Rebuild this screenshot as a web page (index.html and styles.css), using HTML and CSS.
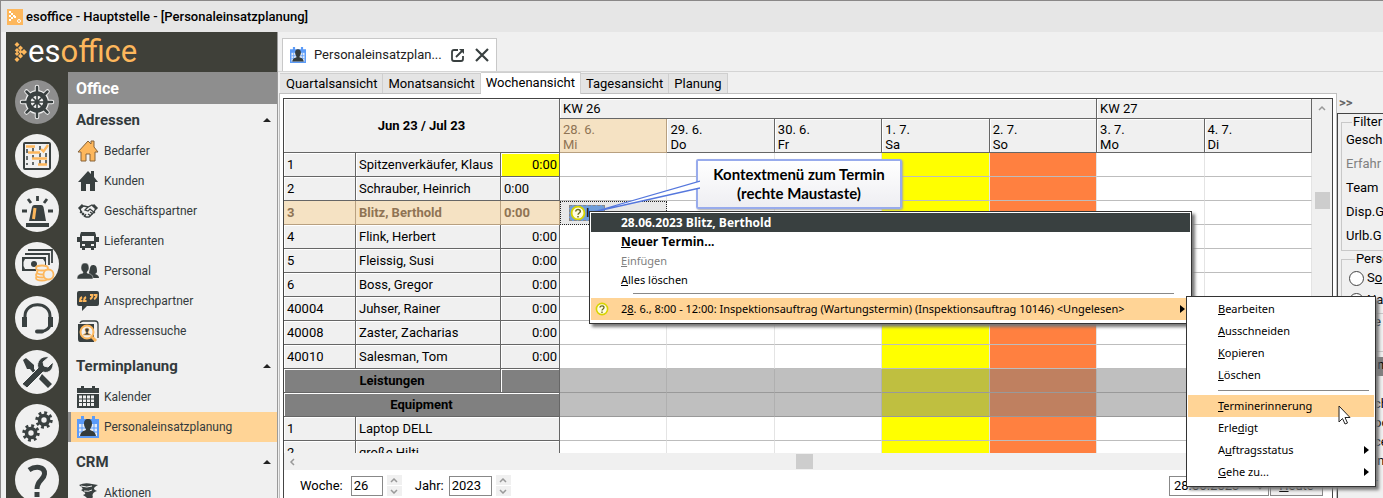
FILE: index.html
```html
<!DOCTYPE html>
<html lang="de">
<head>
    <meta charset="UTF-8">
    <meta name="viewport" content="width=device-width, initial-scale=1.0">
    <title>esoffice - Hauptstelle - [Personaleinsatzplanung]</title>
    <link rel="stylesheet" href="styles.css">
</head>
<body>
    <!-- Shared icons -->
    <svg class="sprite" width="0" height="0" aria-hidden="true">
        <defs>
            <symbol id="house" viewBox="0 0 22 22">
                <path d="M11 1 L1 12 H4 V21 H9 V14 H13 V21 H18 V12 H21 L17 7 V1 H14 V4 Z" />
            </symbol>
            <symbol id="staff" viewBox="0 0 22 22">
                <path d="M0 3 H22 V22 H0 Z M4 0 H7 V5 H4 Z M15 0 H18 V5 H15 Z" fill="#5b9bf8" />
                <path d="M2 8 H20 V20 H2 Z" fill="#e4ecf8" />
                <path d="M2 12 H20 M2 16 H20 M5 8 V20 M17 8 V20" stroke="#5b9bf8" fill="none" />
                <path d="M11 3 C14 3 15 5 15 8 C15 11 13 12 13 14 C15 15 18 15 19 20 H3 C4 15 7 15 9 14 C9 12 7 11 7 8 C7 5 8 3 11 3 Z" fill="#343c3c" />
            </symbol>
            <symbol id="gear" viewBox="-10 -10 20 20">
                <circle r="5" fill="none" stroke="#394040" stroke-width="4" />
                <circle r="8" fill="none" stroke="#394040" stroke-width="3.4" stroke-dasharray="3.14 3.14" />
            </symbol>
            <symbol id="question" viewBox="0 0 14 14">
                <circle cx="7" cy="7" r="5.6" fill="#fffde0" stroke="#d8d400" stroke-width="1.6" />
                <path d="M5 5.6 C5 3.4 9 3.4 9 5.6 C9 7 7 7 7 8.6 M7 9.6 V11" fill="none" stroke="#6a6a20" stroke-width="1.3" />
            </symbol>
        </defs>
    </svg>

    <header class="titlebar">
        <svg class="app-icon" viewBox="0 0 16 16">
            <rect width="16" height="16" fill="#fdb75c" />
            <path d="M2 2h2v2h-2z M4 4h2v2h-2z M6 6h2v2h-2z M4 8h2v2h-2z M2 6h2v2h-2z M2 10h2v2h-2z M7 7h2v2h-2z" fill="#fff" />
            <circle cx="12" cy="12" r="1.5" fill="none" stroke="#fff" />
        </svg>
        <span>esoffice - Hauptstelle - [Personaleinsatzplanung]</span>
    </header>

    <div class="app">
        <aside class="sidebar">
            <div class="logo">
                <svg width="13" height="20" viewBox="0 0 13 20" fill="#fdb75c">
                    <path d="M3 0l2.500 2.500-2.500 2.500-2.500-2.500z M6.500 3.500l2.500 2.500-2.500 2.500-2.500-2.500z M3 6l2.200 2.200-2.200 2.200-2.200-2.200z M10 7l3 3-3 3-3-3z M3 9.600l2.200 2.200-2.200 2.200-2.200-2.200z M6.500 7.600l2.200 2.200-2.200 2.200-2.200-2.200z M6.500 11.500l2.500 2.500-2.500 2.500-2.500-2.500z M3 15l2.500 2.500-2.500 2.500-2.500-2.500z" />
                </svg>
                <span class="logo-text">es<b>office</b></span>
            </div>
            <div class="sidebar-body">
                <nav class="rail" aria-label="Module">
                    <button class="rail-button active" aria-label="Office">
                        <svg viewBox="0 0 44 44">
                            <g stroke="#f0f0f0" stroke-width="4.500" stroke-linecap="round"><path d="M22 7V37M7 22H37M11.500 11.500L32.500 32.500M32.500 11.500L11.500 32.500" /></g>
                            <circle cx="22" cy="22" r="12" fill="#f0f0f0" />
                            <g stroke="#394040" stroke-width="2.500" stroke-linecap="round"><path d="M22 7V37M7 22H37M11.500 11.500L32.500 32.500M32.500 11.500L11.500 32.500" /></g>
                            <circle cx="22" cy="22" r="8.500" fill="#f0f0f0" stroke="#394040" stroke-width="4.500" />
                            <path d="M22 15V29M15 22H29M17 17L27 27M27 17L17 27" stroke="#394040" stroke-width="1.600" />
                            <circle cx="22" cy="22" r="2.500" fill="#394040" />
                        </svg>
                    </button>
                    <button class="rail-button" aria-label="Planung">
                        <svg viewBox="0 0 44 44" fill="none">
                            <rect x="9" y="9" width="26" height="26" rx="1" stroke="#394040" stroke-width="2" />
                            <path d="M12 15V31M18 14V31M25 12V31M31 19V31" stroke="#394040" stroke-width="1.500" stroke-dasharray="4 3" />
                            <path d="M11 12.500H20M13 18.500H25M17 24.500H32M23 30.500H32M26 15L28.500 17.500L33 11" stroke="#fdb75c" stroke-width="2.400" />
                        </svg>
                    </button>
                    <button class="rail-button" aria-label="Alarm">
                        <svg viewBox="0 0 44 44">
                            <path d="M14 33L17 19Q17.500 17 19.500 17H26Q28 17 28.500 19L31 33Z M11 35H34V39H11Z" fill="#394040" />
                            <path d="M20 20L18.500 31" stroke="#fdb75c" stroke-width="3" />
                            <path d="M22.500 8V13M13 11L16 15M32 11L29 15M7 23H12M33 23H38" stroke="#394040" stroke-width="2.800" />
                        </svg>
                    </button>
                    <button class="rail-button" aria-label="Finanzen">
                        <svg viewBox="0 0 44 44">
                            <path d="M13 8H37V21M10 12H34V23" fill="none" stroke="#394040" stroke-width="1.800" />
                            <rect x="7" y="15" width="24" height="14" fill="#394040" />
                            <path d="M10 17H28L30 20V24L28 27H10L8.500 24V20Z" fill="#f0f0f0" />
                            <circle cx="19" cy="22" r="3" fill="#394040" />
                            <path d="M21 28H34V38H21Z" fill="#f0f0f0" />
                            <g fill="#f0f0f0" stroke="#fdb75c" stroke-width="1.800"><ellipse cx="27" cy="36" rx="6" ry="2.500" /><ellipse cx="27" cy="33" rx="6" ry="2.500" /><ellipse cx="28" cy="30" rx="6" ry="2.500" /><ellipse cx="27" cy="26" rx="6" ry="2.500" /><circle cx="33.500" cy="32.500" r="5" /></g>
                        </svg>
                    </button>
                    <button class="rail-button" aria-label="Service">
                        <svg viewBox="0 0 44 44" fill="none" stroke="#394040">
                            <path d="M10 24V20C10 5 35 5 35 20V29Q34 34 27 35.500" stroke-width="3" />
                            <path d="M9.500 21V31M35.500 21V31" stroke-width="5" />
                            <path d="M22 35.500H27" stroke-width="4" stroke-linecap="round" />
                        </svg>
                    </button>
                    <button class="rail-button" aria-label="Werkzeuge">
                        <svg viewBox="0 0 44 44">
                            <path d="M8 10L11 8L19 15L19 19L23 23L20 25L15 19L12 19Z M27 24L37 34L33 38L24 29Z" fill="#394040" />
                            <path d="M7 34L23 18C21 12 26 5 34 7L28 12L29 16L33 17L38 12C39 19 34 24 28 22L12 38Z" fill="#394040" stroke="#f0f0f0" stroke-width="1" />
                        </svg>
                    </button>
                    <button class="rail-button" aria-label="Einstellungen">
                        <svg viewBox="0 0 44 44">
                            <use href="#gear" x="20" y="7" width="18" height="18" />
                            <use href="#gear" x="7" y="20" width="18" height="18" />
                        </svg>
                    </button>
                    <button class="rail-button" aria-label="Hilfe">
                        <svg viewBox="0 0 44 44" fill="none" stroke="#394040" stroke-width="5">
                            <path d="M14 12C20 8 30 8 29.500 16C29 22 22 22 22 31M22 34V39" />
                        </svg>
                    </button>
                </nav>
                <nav class="menu" aria-label="Office">
                    <h1 class="menu-title">Office</h1>
                    <h2 class="menu-heading first">Adressen <i class="up"></i></h2>
                    <a class="menu-item" href="#">
                        <svg class="icon" viewBox="0 0 22 22"><use href="#house" fill="#fdb75c" stroke="#85633a" /></svg>Bedarfer
                    </a>
                    <a class="menu-item" href="#">
                        <svg class="icon" viewBox="0 0 22 22"><use href="#house" /></svg>Kunden
                    </a>
                    <a class="menu-item" href="#">
                        <svg class="icon" viewBox="0 0 22 22">
                            <g fill="none" stroke="#394040" stroke-width="1.300">
                                <path d="M3 8L7 6L11 7L15 5L19 8L17 12L12 17L9 17L4 12Z" />
                                <path d="M11 7L8 10L11 11L13 9L18 13M11 14L14 16M13 12L16 14M5 11L3 13M7 13L5 15M9 14L7 17" />
                                <path d="M2 9L6 5M20 9L16 5" stroke-width="3" />
                            </g>
                        </svg>Geschäftspartner
                    </a>
                    <a class="menu-item" href="#">
                        <svg class="icon" viewBox="0 0 22 22">
                            <path d="M4 2H18L19 5V18H17V20H14V18H8V20H5V18H3V5Z M0 7H3V12H0Z M19 7H22V12H19Z" />
                            <path d="M5 6H17V11H5Z M5 14H8V16H5Z M14 14H17V16H14Z" fill="#f0f0f0" />
                        </svg>Lieferanten
                    </a>
                    <a class="menu-item" href="#">
                        <svg class="icon" viewBox="0 0 22 22">
                            <path d="M16 5C19 5 20 7 20 11C20 13 19 13 18 14C21 15 22 16 22 18H13L12 13C13 8 13 5 16 5Z" />
                            <path d="M8 3C11 3 12 5 12 8C12 11 10 11 10 13C14 14 16 15 16 19H0C0 15 2 14 6 13C6 11 4 11 4 8C4 5 5 3 8 3Z" stroke="#f0f0f0" stroke-width=".5" />
                        </svg>Personal
                    </a>
                    <a class="menu-item" href="#">
                        <svg class="icon" viewBox="0 0 22 22">
                            <path d="M2 1H20Q22 1 22 3V14Q22 16 20 16H10L5 21V16H2Q0 16 0 14V3Q0 1 2 1Z" />
                            <path d="M5 7Q3 8 3 11H5.500M9 7Q7 8 7 11H9.500M13 5H15.500Q15.500 8 13 9M17 5H19.500Q19.500 8 17 9" fill="none" stroke="#fdb75c" stroke-width="2" />
                        </svg>Ansprechpartner
                    </a>
                    <a class="menu-item" href="#">
                        <svg class="icon" viewBox="0 0 22 22">
                            <path d="M3 3Q4 1 6 1H18Q21 1 21 4V18" fill="none" stroke="#394040" stroke-width="1.300" />
                            <path d="M1 4H17V22H3Q1 22 1 19Z" />
                            <circle cx="10" cy="12" r="6.500" fill="#f0f0f0" stroke="#fdb75c" stroke-width="2" />
                            <path d="M15 17L19 21" stroke="#fdb75c" stroke-width="3" />
                            <path d="M10 8C13 8 12 11 11 12V13L14 15H6L9 13V12C8 11 7 8 10 8Z" stroke="#fdb75c" stroke-width=".7" />
                        </svg>Adressensuche
                    </a>
                    <h2 class="menu-heading">Terminplanung <i class="up"></i></h2>
                    <a class="menu-item" href="#">
                        <svg class="icon" viewBox="0 0 22 22">
                            <path d="M0 2H22V7H0Z M0 8H22V22H0Z M4 0H7V3H4Z M15 0H18V3H15Z" />
                            <path d="M2 9.500H17V20H2Z" fill="#f0f0f0" />
                            <path d="M2 13H17M2 16.500H17M5.500 9V20M9.500 9V20M13.500 9V20" stroke="#394040" />
                        </svg>Kalender
                    </a>
                    <a class="menu-item selected" href="#">
                        <svg class="icon"><use href="#staff" /></svg>Personaleinsatzplanung
                    </a>
                    <h2 class="menu-heading">CRM <i class="up"></i></h2>
                    <a class="menu-item" href="#">
                        <svg class="icon" viewBox="0 0 22 22">
                            <path d="M2 3Q8 0 15 2L21 3Q15 6 18 8L20 9Q14 11 16 15Q13 19 8 20Q11 16 9 15L6 13Q10 12 7 10L4 8Q8 7 2 3Z" />
                            <path d="M4 4Q10 6 15 4M7 9Q12 10 15 8" fill="none" stroke="#f0f0f0" />
                        </svg>Aktionen
                    </a>
                </nav>
            </div>
        </aside>

        <main class="main">
            <div class="doc-tabs">
                <div class="doc-tab">
                    <svg class="tab-icon"><use href="#staff" /></svg>
                    <span>Personaleinsatzplan...</span>
                    <button class="tab-button" aria-label="In neuem Fenster öffnen">
                        <svg width="14" height="14" viewBox="0 0 14 14" fill="none" stroke="#394040" stroke-width="1.800">
                            <path d="M7 2H3Q1 2 1 4V11Q1 13 3 13H10Q12 13 12 11V8M5 9L11 3" />
                            <path d="M8 1H13V6Z" fill="#394040" stroke="none" />
                        </svg>
                    </button>
                    <button class="tab-button" aria-label="Schließen">
                        <svg width="14" height="14" viewBox="0 0 14 14" stroke="#394040" stroke-width="2.200">
                            <path d="M1 1L13 13M13 1L1 13" />
                        </svg>
                    </button>
                </div>
            </div>

            <div class="view-tabs">
                <button class="view-tab">Quartalsansicht</button>
                <button class="view-tab">Monatsansicht</button>
                <button class="view-tab current">Wochenansicht</button>
                <button class="view-tab">Tagesansicht</button>
                <button class="view-tab">Planung</button>
            </div>

            <div class="workspace">
                <section class="planner-frame">
                    <div class="planner">
                        <div class="grid-area">
                            <div class="table-clip">
                                <table class="plan">
                                    <colgroup>
                                        <col class="col-nr"><col class="col-name"><col class="col-hours">
                                        <col><col><col><col><col><col><col>
                                    </colgroup>
                                    <thead>
                                        <tr class="weeks">
                                            <th colspan="3" rowspan="2" class="period">Jun 23 / Jul 23</th>
                                            <th colspan="5">KW 26</th>
                                            <th colspan="2">KW 27</th>
                                        </tr>
                                        <tr class="days">
                                            <th class="today">28. 6.<br>Mi</th>
                                            <th>29. 6.<br>Do</th>
                                            <th>30. 6.<br>Fr</th>
                                            <th>1. 7.<br>Sa</th>
                                            <th>2. 7.<br>So</th>
                                            <th>3. 7.<br>Mo</th>
                                            <th>4. 7.<br>Di</th>
                                        </tr>
                                    </thead>
                                    <tbody>
                                        <tr><th>1</th><th>Spitzenverkäufer, Klaus</th><th class="hours yellow">0:00</th><td></td><td></td><td></td><td class="sa"></td><td class="so"></td><td></td><td></td></tr>
                                        <tr><th>2</th><th>Schrauber, Heinrich</th><th>0:00</th><td></td><td></td><td></td><td class="sa"></td><td class="so"></td><td></td><td></td></tr>
                                        <tr class="picked"><th>3</th><th>Blitz, Berthold</th><th>0:00</th><td class="focus"><div class="event"><svg width="16" height="16"><use href="#question" /></svg>I</div></td><td></td><td></td><td class="sa"></td><td class="so"></td><td></td><td></td></tr>
                                        <tr><th>4</th><th>Flink, Herbert</th><th class="hours">0:00</th><td></td><td></td><td></td><td class="sa"></td><td class="so"></td><td></td><td></td></tr>
                                        <tr><th>5</th><th>Fleissig, Susi</th><th class="hours">0:00</th><td></td><td></td><td></td><td class="sa"></td><td class="so"></td><td></td><td></td></tr>
                                        <tr><th>6</th><th>Boss, Gregor</th><th class="hours">0:00</th><td></td><td></td><td></td><td class="sa"></td><td class="so"></td><td></td><td></td></tr>
                                        <tr><th>40004</th><th>Juhser, Rainer</th><th class="hours">0:00</th><td></td><td></td><td></td><td class="sa"></td><td class="so"></td><td></td><td></td></tr>
                                        <tr><th>40008</th><th>Zaster, Zacharias</th><th class="hours">0:00</th><td></td><td></td><td></td><td class="sa"></td><td class="so"></td><td></td><td></td></tr>
                                        <tr><th>40010</th><th>Salesman, Tom</th><th class="hours">0:00</th><td></td><td></td><td></td><td class="sa"></td><td class="so"></td><td></td><td></td></tr>
                                        <tr class="group"><th colspan="2">Leistungen</th><th></th><td></td><td></td><td></td><td class="sa"></td><td class="so"></td><td></td><td></td></tr>
                                        <tr class="group"><th colspan="3">Equipment</th><td></td><td></td><td></td><td class="sa"></td><td class="so"></td><td></td><td></td></tr>
                                        <tr><th>1</th><th colspan="2">Laptop DELL</th><td></td><td></td><td></td><td class="sa"></td><td class="so"></td><td></td><td></td></tr>
                                        <tr><th>2</th><th colspan="2">große Hilti</th><td></td><td></td><td></td><td class="sa"></td><td class="so"></td><td></td><td></td></tr>
                                    </tbody>
                                </table>
                            </div>
                            <div class="vscroll">
                                <svg width="8" height="6" viewBox="0 0 8 6"><path d="M1 5L4 2L7 5" /></svg>
                                <div class="vthumb"></div>
                            </div>
                        </div>
                        <div class="hscroll">
                            <svg width="6" height="8" viewBox="0 0 6 8"><path d="M5 1L2 4L5 7" /></svg>
                            <div class="hthumb"></div>
                        </div>
                        <form class="controls">
                            <label for="week">Woche:</label>
                            <input id="week" class="week" type="text" value="26">
                            <span class="spinner">
                                <button type="button" aria-label="Woche vor"><svg width="8" height="5" viewBox="0 0 8 5"><path d="M1 4L4 1L7 4" /></svg></button>
                                <button type="button" aria-label="Woche zurück"><svg width="8" height="5" viewBox="0 0 8 5"><path d="M1 1L4 4L7 1" /></svg></button>
                            </span>
                            <label for="year" class="year-label">Jahr:</label>
                            <input id="year" class="year" type="text" value="2023">
                            <span class="spinner">
                                <button type="button" aria-label="Jahr vor"><svg width="8" height="5" viewBox="0 0 8 5"><path d="M1 4L4 1L7 4" /></svg></button>
                                <button type="button" aria-label="Jahr zurück"><svg width="8" height="5" viewBox="0 0 8 5"><path d="M1 1L4 4L7 1" /></svg></button>
                            </span>
                            <select class="date" aria-label="Datum"><option>28.06.2023</option></select>
                            <button type="button" class="today-button"><u>H</u>eute</button>
                        </form>
                    </div>
                </section>

                <aside class="filter">
                    <button class="collapse" aria-label="Filter ausblenden">&gt;&gt;</button>
                    <div class="filter-body">
                        <fieldset>
                            <legend>Filter</legend>
                            <p>Gesch</p>
                            <p class="off">Erfahr</p>
                            <p>Team</p>
                            <p>Disp.G</p>
                            <p>Urlb.G</p>
                        </fieldset>
                        <fieldset class="persons">
                            <legend>Perso</legend>
                            <label><input type="radio" name="sort"><span>S<u>o</u></span></label>
                            <label><input type="radio" name="sort"><span>Na</span></label>
                        </fieldset>
                        <p class="rest">e</p>
                        <p class="band">in</p>
                        <div class="legend-list">
                            <p>ch</p>
                            <p>oo</p>
                            <p>ce</p>
                            <p>in</p>
                        </div>
                        <p class="private">Privat-</p>
                    </div>
                </aside>
            </div>
        </main>
    </div>

    <!-- Callout -->
    <div class="callout">
        <svg class="pointer" width="108" height="34" viewBox="0 0 108 34">
            <path d="M108 2L1 33L108 9" fill="#fff" stroke="#5577dd" stroke-width="1.300" />
        </svg>
        <p>Kontextmenü zum Termin<br>(rechte Maustaste)</p>
    </div>

    <!-- Context menu -->
    <div class="context-menu" role="menu">
        <div class="context-title">28.06.2023 Blitz, Berthold</div>
        <button class="context-item strong" role="menuitem"><span><u>N</u>euer Termin...</span></button>
        <button class="context-item" role="menuitem" disabled><span><u>E</u>infügen</span></button>
        <button class="context-item" role="menuitem"><span><u>A</u>lles löschen</span></button>
        <hr>
        <div class="context-parent">
            <button class="context-item wide marked" role="menuitem">
                <svg class="context-icon" width="14" height="14"><use href="#question" /></svg>
                <span>2<u>8</u>. 6., 8:00 - 12:00: Inspektionsauftrag (Wartungstermin) (Inspektionsauftrag 10146) &lt;Ungelesen&gt;</span>
                <i class="right"></i>
            </button>
            <div class="context-menu submenu" role="menu">
                <button class="context-item wide" role="menuitem"><span><u>B</u>earbeiten</span></button>
                <button class="context-item wide" role="menuitem"><span><u>A</u>usschneiden</span></button>
                <button class="context-item wide" role="menuitem"><span><u>K</u>opieren</span></button>
                <button class="context-item wide" role="menuitem"><span><u>L</u>öschen</span></button>
                <hr>
                <button class="context-item wide marked" role="menuitem"><span><u>T</u>erminerinnerung</span></button>
                <button class="context-item wide" role="menuitem"><span>Erle<u>d</u>igt</span></button>
                <button class="context-item wide" role="menuitem"><span>A<u>u</u>ftragsstatus</span><i class="right"></i></button>
                <button class="context-item wide" role="menuitem"><span><u>G</u>ehe zu...</span><i class="right"></i></button>
                <svg class="cursor" width="13" height="20" viewBox="0 0 13 20">
                    <path d="M1 1V17L4.500 13.500L7 19L9.500 18L7 12.500H12Z" fill="#fff" stroke="#222" />
                </svg>
            </div>
        </div>
    </div>
</body>
</html>
```
FILE: styles.css
```css
* {
    box-sizing: border-box;
}
body {
    margin: 0;
    height: 100vh;
    overflow: hidden;
    display: flex;
    flex-direction: column;
    position: relative;
    border-top: 1px solid #8a8888;
    border-left: 1px solid #8a8888;
    background: #f0f0f0;
    color: #000;
    font: 13px/16px Roboto, "Liberation Sans", sans-serif;
}
button, input, select {
    font: inherit;
    color: inherit;
}
button {
    padding: 0;
    border: 0;
    background: none;
}
p {
    margin: 0;
}
.sprite {
    position: absolute;
}

/* Title bar */
.titlebar {
    flex: 0 0 31px;
    display: flex;
    align-items: center;
    gap: 3px;
    padding-left: 6px;
    background: #e6e6e6;
    font-weight: 500;
}
.app-icon {
    width: 16px;
    height: 16px;
}
.app {
    flex: 1;
    min-height: 0;
    display: flex;
    padding-left: 5px;
}

/* Sidebar */
.sidebar {
    flex: 0 0 271px;
    display: flex;
    flex-direction: column;
    background: #3f4039;
}
.logo {
    flex: 0 0 40px;
    display: flex;
    align-items: center;
    gap: 1px;
    padding-left: 8px;
    color: #fff;
}
.logo-text {
    font-size: 31px;
    font-weight: 400;
    line-height: 40px;
}
.logo-text b {
    color: #fdb75c;
    font-weight: 400;
}
.sidebar-body {
    flex: 1;
    min-height: 0;
    display: flex;
    overflow: hidden;
}
.rail {
    flex: 0 0 62px;
    display: flex;
    flex-direction: column;
    align-items: center;
    gap: 10px;
    padding-top: 8px;
}
.rail-button {
    flex: 0 0 44px;
    width: 44px;
    border-radius: 50%;
    background: #f0f0f0;
}
.rail-button.active {
    background: #8e8e8e;
}
.rail-button svg {
    display: block;
    width: 44px;
    height: 44px;
}
.menu {
    flex: 1;
    background: #f0f0f0;
    color: #333a3c;
}
.menu-title {
    margin: 0;
    padding-left: 8px;
    background: #8e8e8e;
    color: #fff;
    font-size: 16px;
    line-height: 34px;
    height: 32px;
}
.menu-heading {
    display: flex;
    align-items: center;
    justify-content: space-between;
    height: 36px;
    margin: 0;
    padding: 4px 6px 0 8px;
    font-size: 15px;
}
.menu-heading.first {
    height: 32px;
    padding-top: 0;
}
.up {
    border: 4px solid transparent;
    border-top: 0;
    border-bottom-color: #222;
}
.menu-item {
    display: flex;
    align-items: center;
    gap: 5px;
    height: 30px;
    padding-left: 9px;
    color: inherit;
    font-size: 12px;
    text-decoration: none;
}
.menu-item.selected {
    border-left: 3px solid #8e8e8e;
    padding-left: 6px;
    background: #ffd496;
}
.icon {
    width: 22px;
    height: 22px;
    fill: #394040;
}

/* Main area */
.main {
    flex: 1;
    min-width: 0;
    display: flex;
    flex-direction: column;
    border-left: 1px solid #9a9a9a;
}
.doc-tabs {
    flex: 0 0 40px;
    display: flex;
    align-items: flex-end;
    padding-left: 4px;
    border-bottom: 1px solid #d4d4d4;
}
.doc-tab {
    display: flex;
    align-items: center;
    gap: 8px;
    height: 33px;
    padding: 0 6px 0 7px;
    border: 1px solid #c8c8c8;
    border-bottom: 0;
    background: #fff;
    color: #222;
}
.tab-icon {
    width: 16px;
    height: 16px;
}
.tab-button {
    width: 16px;
    height: 16px;
    line-height: 0;
}
.view-tabs {
    flex: 0 0 21px;
    display: flex;
    align-items: flex-end;
    padding-left: 2px;
}
.view-tab {
    height: 20px;
    padding: 0 5px;
    border: 1px solid #cfcfcf;
    border-width: 1px 1px 0 0;
    background: #e4e4e4;
    white-space: nowrap;
}
.view-tab:first-child {
    padding-left: 6px;
}
.view-tab.current {
    height: 22px;
    margin-bottom: -1px;
    padding-bottom: 2px;
    z-index: 1;
    background: #fff;
}
.workspace {
    flex: 1;
    min-height: 0;
    display: flex;
}
.planner-frame {
    flex: 1;
    min-width: 0;
    display: flex;
    margin-left: 1px;
    padding: 4px 3px 0;
    border: 1px solid #c0c0c0;
    border-bottom: 0;
    background: #fff;
}
.planner {
    flex: 1;
    min-width: 0;
    display: flex;
    flex-direction: column;
    border: 1px solid #444;
    border-bottom: 0;
}
.grid-area {
    flex: 1;
    min-height: 0;
    display: flex;
}
.table-clip {
    flex: 1;
    min-width: 0;
    overflow: hidden;
}

/* Planning table */
.plan {
    width: 100%;
    table-layout: fixed;
    border-spacing: 0;
}
.col-nr {
    width: 72px;
}
.col-name {
    width: 145px;
}
.col-hours {
    width: 59px;
}
.plan th {
    padding: 0 3px;
    border: 1px solid #666;
    border-width: 0 1px 1px 0;
    background: #f0f0f0;
    box-shadow: inset 1px 1px #fff;
    font-weight: normal;
    text-align: left;
    white-space: nowrap;
}
.plan td {
    padding: 0;
    border: 1px solid #bdbdbd;
    border-width: 0 1px 1px 0;
    border-right-color: #e4e4e4;
}
.plan tr {
    height: 24px;
}
.plan .weeks {
    height: 20px;
}
.plan .days {
    height: 34px;
}
.plan .days th {
    padding-top: 3px;
    line-height: 15px;
}
.plan .period {
    font-weight: bold;
    text-align: center;
}
.plan .hours {
    padding-right: 2px;
    text-align: right;
}
.plan .yellow {
    background: #ff0;
}
.plan .today, .plan .picked th {
    border-color: #b8a080;
    background: #f5e2c3;
    box-shadow: none;
    color: #8f7454;
}
.plan .picked th {
    font-weight: bold;
}
.sa {
    background: #ff0;
}
.so {
    background: #ff8040;
}
.plan .group th {
    background: #808080;
    font-weight: bold;
    text-align: center;
}
.group td {
    background: #bfbfbf;
    border-bottom-color: #999;
    border-right-color: #b0b0b0;
}
.group .sa {
    background: #bfbf40;
}
.group .so {
    background: #bf8060;
}
.plan .focus {
    border: 1px dotted #222;
    background: #e8e8e8;
}
.event {
    display: flex;
    align-items: center;
    width: 36px;
    height: 16px;
    margin-left: 8px;
    border: 1px dashed #888;
    background: #6f9edb;
}

/* Scroll bars */
.vscroll, .hscroll {
    display: flex;
    background: #f0f0f0;
    fill: none;
    stroke: #999;
    stroke-width: 1.5;
}
.vscroll {
    flex: 0 0 20px;
    flex-direction: column;
    align-items: center;
    padding-top: 6px;
}
.vthumb {
    width: 15px;
    height: 17px;
    margin-top: 81px;
    background: #cdcdcd;
}
.hscroll {
    flex: 0 0 17px;
    align-items: center;
    padding-left: 5px;
}
.hthumb {
    width: 17px;
    height: 15px;
    margin-left: 48%;
    background: #cdcdcd;
}

/* Week, year and date controls */
.controls {
    flex: 0 0 27px;
    display: flex;
    align-items: center;
    padding: 5px 9px 2px 16px;
}
.controls input, .date {
    height: 20px;
    padding: 0 2px;
    border: 1px solid #888;
    border-radius: 0;
    background: #fff;
}
.controls .week {
    width: 32px;
    margin: 0 4px 0 8px;
}
.controls .year {
    width: 43px;
    margin: 0 4px 0 5px;
}
.year-label {
    margin-left: 13px;
}
.spinner {
    display: flex;
    flex-direction: column;
    gap: 1px;
    width: 15px;
}
.spinner button {
    height: 10px;
    background: #f0f0f0;
    line-height: 0;
    fill: none;
    stroke: #999;
    stroke-width: 1.5;
}
.controls .date {
    width: 100px;
    margin: 0 1px 0 auto;
    padding: 0;
}
.today-button {
    width: 53px;
    height: 20px;
    border: 1px solid #888;
    background: #f0f0f0;
}

/* Filter panel */
.filter {
    flex: 0 0 46px;
    display: flex;
    flex-direction: column;
    min-height: 0;
    overflow: hidden;
    white-space: nowrap;
}
.collapse {
    height: 20px;
    padding-left: 2px;
    color: #666;
    font-weight: bold;
    text-align: left;
}
.filter-body {
    flex: 1;
    min-height: 0;
    overflow: hidden;
    border: 1px solid #444;
    border-width: 1px 0 0 1px;
    padding-left: 3px;
}
.filter fieldset {
    height: 137px;
    min-width: 0;
    margin: 0;
    padding: 2px 0 0 4px;
    border: 1px solid #c8c8c8;
    border-right: 0;
}
.filter legend {
    margin-left: 6px;
    padding: 0 1px;
}
.filter fieldset p {
    height: 24px;
}
.filter .off {
    color: #808080;
}
.filter .persons {
    height: 63px;
    padding: 0 0 0 7px;
}
.persons label {
    display: flex;
    align-items: center;
    gap: 3px;
    height: 22px;
}
.persons input {
    appearance: none;
    flex: 0 0 15px;
    height: 15px;
    margin: 0;
    border: 1px solid #444;
    border-radius: 50%;
    background: #fff;
}
.rest {
    height: 38px;
    margin-bottom: 5px;
    border-bottom: 1px solid #c8c8c8;
}
.rest, .band, .legend-list {
    padding-left: 33px;
}
.band {
    height: 19px;
    background: #808080;
}
.legend-list {
    padding-top: 20px;
}
.legend-list p {
    height: 19px;
}

/* Callout */
.callout {
    position: absolute;
    left: 695px;
    top: 158px;
    width: 206px;
    padding: 4px 0;
    border: 2px solid #98abec;
    border-radius: 2px;
    background: linear-gradient(#fff, #eeeef2);
    box-shadow: 1px 1px 2px #aaa;
    font: bold 15px/19px Lato, sans-serif;
    text-align: center;
}
.pointer {
    position: absolute;
    right: 100%;
    top: 18px;
    margin-right: -2px;
}

/* Context menus */
.context-menu {
    position: absolute;
    left: 588px;
    top: 210px;
    width: 603px;
    padding: 1px 1px 3px;
    border: 1px solid #333;
    background: #fff;
    box-shadow: 3px 3px 3px #777;
    font: 11px/19px "Noto Sans", "Open Sans", sans-serif;
}
.context-title {
    padding-left: 30px;
    background: #394040;
    color: #fff;
}
.context-item {
    display: flex;
    align-items: center;
    width: 100%;
    height: 19px;
    padding-left: 30px;
    text-align: left;
    white-space: nowrap;
}
.context-item.wide {
    height: 22px;
    padding-bottom: 1px;
}
.context-title, .context-item.strong {
    font: bold 12px/19px "Open Sans", sans-serif;
}
.context-item:disabled {
    color: #808080;
}
.context-item.marked {
    background: #ffd496;
}
.context-menu hr {
    height: 1px;
    margin: 4px 16px 4px 42px;
    border: 0;
    background: #888;
}
.context-parent {
    position: relative;
}
.context-icon {
    margin: 0 12px 0 -26px;
    flex: none;
}
.right {
    margin-left: auto;
    margin-right: 5px;
    border: 4px solid transparent;
    border-right: 0;
    border-left: 5px solid #000;
}
.submenu {
    left: calc(100% - 4px);
    top: -2px;
    width: 190px;
}
.submenu hr {
    margin: 4px 5px 4px 30px;
}
.cursor {
    position: absolute;
    right: 24px;
    top: 108px;
}
```
